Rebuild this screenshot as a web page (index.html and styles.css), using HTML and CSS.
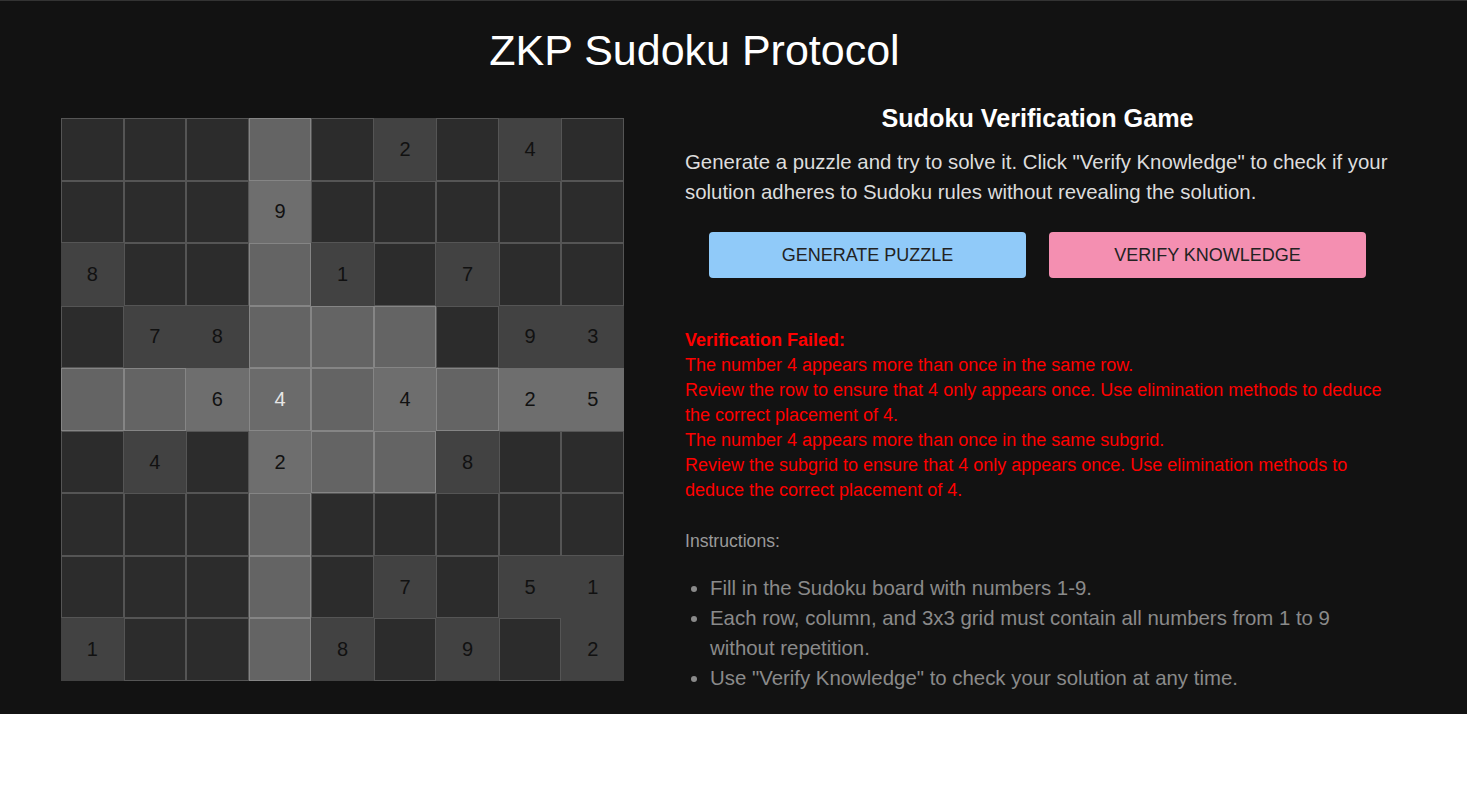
FILE: index.html
```html
<!DOCTYPE html>
<html lang="en">
<head>
<meta charset="utf-8">
<title>ZKP Sudoku Protocol</title>
<link rel="stylesheet" href="styles.css">
</head>
<body>
<div class="app">
  <h1 class="title">ZKP Sudoku Protocol</h1>
  <div class="main">
    <div class="board">
      <div class="cell"></div><div class="cell"></div><div class="cell"></div><div class="cell hl"></div><div class="cell"></div><div class="cell given">2</div><div class="cell"></div><div class="cell given">4</div><div class="cell"></div>
      <div class="cell"></div><div class="cell"></div><div class="cell"></div><div class="cell given hl">9</div><div class="cell"></div><div class="cell"></div><div class="cell"></div><div class="cell"></div><div class="cell"></div>
      <div class="cell given">8</div><div class="cell"></div><div class="cell"></div><div class="cell hl"></div><div class="cell given">1</div><div class="cell"></div><div class="cell given">7</div><div class="cell"></div><div class="cell"></div>
      <div class="cell"></div><div class="cell given">7</div><div class="cell given">8</div><div class="cell hl"></div><div class="cell hl"></div><div class="cell hl"></div><div class="cell"></div><div class="cell given">9</div><div class="cell given">3</div>
      <div class="cell hl"></div><div class="cell hl"></div><div class="cell given hl">6</div><div class="cell hl sel">4</div><div class="cell hl"></div><div class="cell given hl">4</div><div class="cell hl"></div><div class="cell given hl">2</div><div class="cell given hl">5</div>
      <div class="cell"></div><div class="cell given">4</div><div class="cell"></div><div class="cell given hl">2</div><div class="cell hl"></div><div class="cell hl"></div><div class="cell given">8</div><div class="cell"></div><div class="cell"></div>
      <div class="cell"></div><div class="cell"></div><div class="cell"></div><div class="cell hl"></div><div class="cell"></div><div class="cell"></div><div class="cell"></div><div class="cell"></div><div class="cell"></div>
      <div class="cell"></div><div class="cell"></div><div class="cell"></div><div class="cell hl"></div><div class="cell"></div><div class="cell given">7</div><div class="cell"></div><div class="cell given">5</div><div class="cell given">1</div>
      <div class="cell given">1</div><div class="cell"></div><div class="cell"></div><div class="cell hl"></div><div class="cell given">8</div><div class="cell"></div><div class="cell given">9</div><div class="cell"></div><div class="cell given">2</div>
    </div>
    <div class="panel">
      <h2 class="panel-title">Sudoku Verification Game</h2>
      <p class="intro">Generate a puzzle and try to solve it. Click "Verify Knowledge" to check if your solution adheres to Sudoku rules without revealing the solution.</p>
      <div class="actions">
        <button class="btn btn-generate">GENERATE PUZZLE</button>
        <button class="btn btn-verify">VERIFY KNOWLEDGE</button>
      </div>
      <div class="result">
        <div class="result-head">Verification Failed:</div>
        <div>The number 4 appears more than once in the same row.</div>
        <div>Review the row to ensure that 4 only appears once. Use elimination methods to deduce the correct placement of 4.</div>
        <div>The number 4 appears more than once in the same subgrid.</div>
        <div>Review the subgrid to ensure that 4 only appears once. Use elimination methods to deduce the correct placement of 4.</div>
      </div>
      <div class="instr-label">Instructions:</div>
      <ul class="instr-list">
        <li>Fill in the Sudoku board with numbers 1-9.</li>
        <li>Each row, column, and 3x3 grid must contain all numbers from 1 to 9 without repetition.</li>
        <li>Use "Verify Knowledge" to check your solution at any time.</li>
      </ul>
    </div>
  </div>
</div>
</body>
</html>
```

FILE: styles.css
```css
* { box-sizing: border-box; }

html, body {
  margin: 0;
  padding: 0;
  background: #ffffff;
  font-family: "Liberation Sans", Arial, sans-serif;
}

.app {
  background: #121212;
  border-top: 1px solid #333333;
}

.title {
  margin: 24px 0 28px 0;
  padding-right: 78px;
  text-align: center;
  font-size: 43px;
  line-height: 50px;
  font-weight: normal;
  color: #ffffff;
}

.main {
  display: flex;
  align-items: flex-start;
  gap: 61px;
  padding: 0 61px;
}

.board {
  margin-top: 15px;
  width: 563px;
  height: 563px;
  flex: none;
  display: grid;
  grid-template-columns: repeat(9, 1fr);
  grid-template-rows: repeat(9, 1fr);
}

.cell {
  background: #2c2c2c;
  border: 1px solid #555555;
  display: flex;
  align-items: center;
  justify-content: center;
  font-size: 20px;
  color: #111111;
}

.cell.hl {
  background: #646464;
  border-color: #858585;
}

.cell.given {
  background: #424242;
  border-color: #424242;
}

.cell.given.hl {
  background: #6e6e6e;
  border-color: #6e6e6e;
}

.cell.sel {
  background: #6b6b6b;
  border-color: #888888;
  color: #e6e6e6;
}

.panel {
  width: 705px;
  flex: none;
}

.panel-title {
  margin: 0;
  text-align: center;
  font-size: 25.2px;
  line-height: 30px;
  font-weight: bold;
  color: #ffffff;
}

.intro {
  margin: 14px 0 0 0;
  font-size: 20.4px;
  line-height: 30px;
  color: #dddddd;
}

.actions {
  margin-top: 25px;
  display: flex;
  justify-content: center;
  gap: 23px;
}

.btn {
  width: 317px;
  height: 46px;
  padding-top: 2px;
  border: none;
  border-radius: 4px;
  font-family: "Liberation Sans", Arial, sans-serif;
  font-size: 18px;
  color: #222222;
  cursor: pointer;
}

.btn-generate { background: #90caf9; }
.btn-verify { background: #f48fb1; }

.result {
  margin-top: 50px;
  font-size: 18px;
  line-height: 25px;
  color: #ff0000;
}

.result-head { font-weight: bold; }

.instr-label {
  margin-top: 26px;
  font-size: 17.6px;
  line-height: 25px;
  color: #9a9a9a;
}

.instr-list {
  margin: 19px 0 0 0;
  padding: 0 0 21px 25px;
  font-size: 20.4px;
  line-height: 30px;
  color: #8a8a8a;
}
```
